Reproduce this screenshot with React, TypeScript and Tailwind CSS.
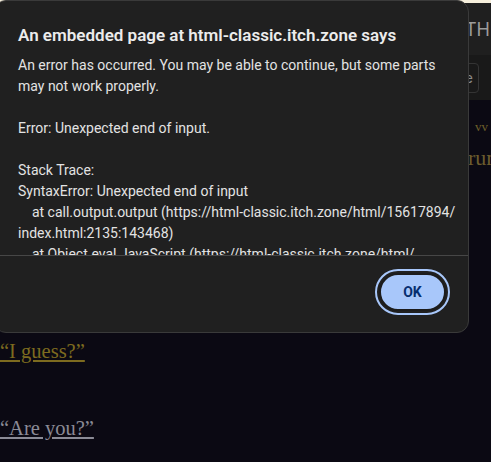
import React from "react";

const lines = [
  "An error has occurred. You may be able to continue, but some parts",
  "may not work properly.",
  "",
  "Error: Unexpected end of input.",
  "",
  "Stack Trace:",
  "SyntaxError: Unexpected end of input",
  "    at call.output.output (https://html-classic.itch.zone/html/15617894/",
  "index.html:2135:143468)",
  "    at Object.eval JavaScript (https://html-classic.itch.zone/html/",
  "15617894/index.html:2135:12345)",
];

const App = () => {
  return (
    <div className="relative w-[491px] h-[462px] overflow-hidden bg-[#0b0913]">
      {/* page behind the dialog */}
      <div className="h-[3px] bg-[#f6efdc]" />
      <div className="h-[52px] bg-[#1f1f1f] flex items-center pl-[465px] font-['Inter',sans-serif] text-[18px] text-[#9b9b9b] whitespace-nowrap">
        THE STORY
      </div>
      <div className="h-[45px] bg-[#191919] flex items-center justify-end pr-[12px]">
        <div className="h-[30px] px-[5px] border border-[#343434] rounded-[4px] flex items-center font-['Inter',sans-serif] text-[14px] text-[#8a8a8a]">
          Save
        </div>
      </div>
      <div className="font-['Liberation_Serif',serif]">
        <div className="flex justify-end pr-[3px] pt-[19px] text-[13px] leading-[16px] text-[#6d5f2a]">
          vv
        </div>
        <div className="pl-[468px] pt-[10px] text-[22px] leading-[26px] text-[#6b5c2e] whitespace-nowrap">
          run
        </div>
        <div className="pt-[168px] text-[20.5px] leading-[25px]">
          <a className="underline text-[#7d6b1f]">“I guess?”</a>
        </div>
        <div className="pt-[52px] text-[20.5px] leading-[25px]">
          <a className="underline text-[#8b8b96]">“Are you?”</a>
        </div>
      </div>

      {/* alert dialog */}
      <div className="absolute left-[-6px] top-0 w-[475px] h-[333px] bg-[#202020] border border-[#3a3a3a] rounded-[12px] flex flex-col font-['Roboto',sans-serif]">
        <div className="pl-[23px] pt-[22px] text-[17px] leading-[24px] font-semibold text-[#ececec]">
          An embedded page at html-classic.itch.zone says
        </div>
        <div className="mt-[8px] h-[200px] overflow-hidden pl-[23px] text-[14px] leading-[21px] text-[#e3e3e3]">
          {lines.map((l, i) => (
            <div key={i} className="h-[21px] whitespace-pre">
              {l}
            </div>
          ))}
        </div>
        <div className="h-px bg-[#474747]" />
        <div className="flex justify-end pr-[22px] pt-[17px]">
          <button className="w-[67px] h-[38px] rounded-full bg-[#a8c7fa] text-[#062e6f] text-[14px] font-bold outline-2 outline-offset-2 outline-[#a8c7fa] border-2 border-[#1c1c1c]">
            OK
          </button>
        </div>
      </div>
    </div>
  );
};

export default App;
